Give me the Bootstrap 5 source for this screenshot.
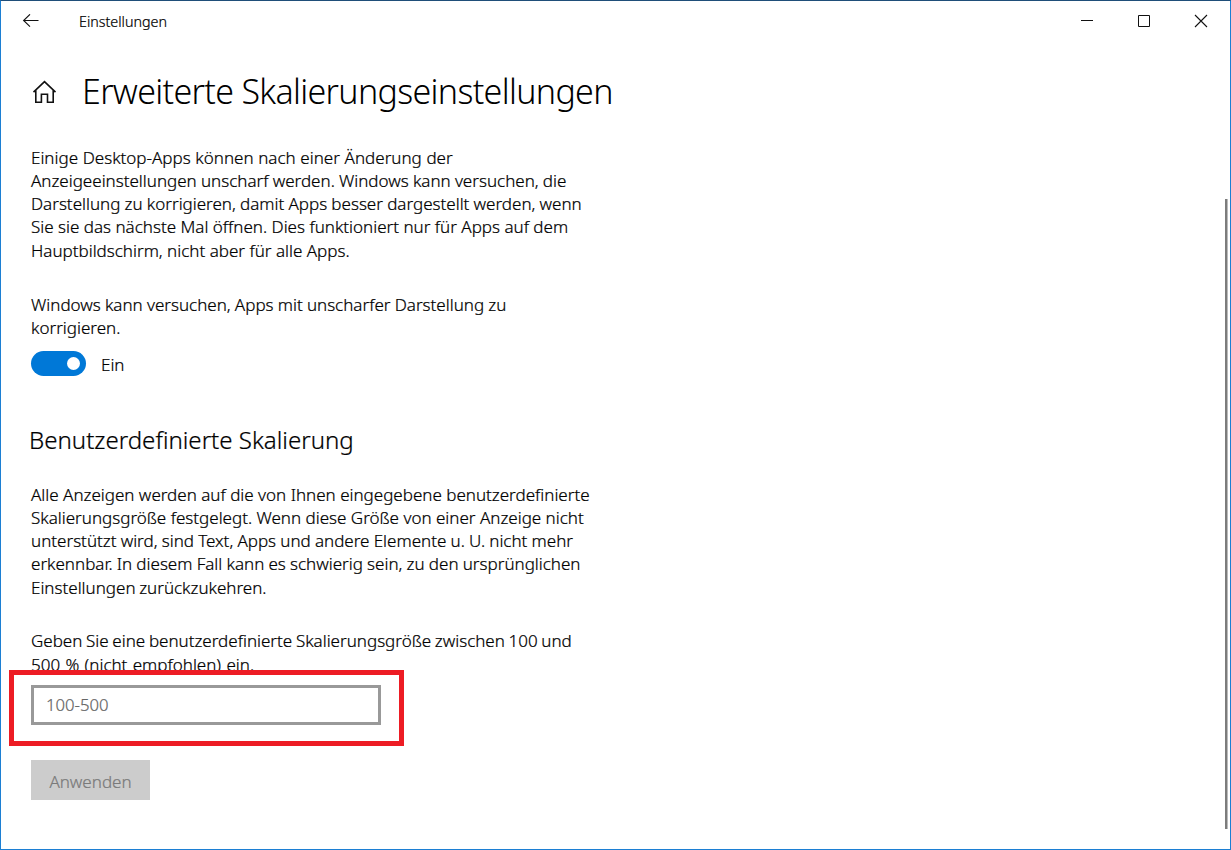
<!DOCTYPE html>
<html lang="de">
<head>
<meta charset="utf-8">
<meta name="viewport" content="width=device-width, initial-scale=1">
<title>Einstellungen</title>
<link href="https://cdn.jsdelivr.net/npm/bootstrap@5.3.0/dist/css/bootstrap.min.css" rel="stylesheet">
<style>
  body { font-family: "Noto Sans", sans-serif; font-weight: 300; font-size: 17px; line-height: 23.25px; color: #000; -webkit-text-stroke: .22px; }
  .app-window { height: 850px; border: 1px solid #1c7fd3; border-top-color: #1f4e79; background: #fff; }
  .title-bar { height: 40px; padding-left: 21px; padding-right: 22px; }
  .title-bar .app-name { font-size: 14.3px; margin-left: 40px; padding-top: 2px; }
  .window-buttons { gap: 43px; }
  .page-head { height: 48px; margin-top: 27px; padding-left: 29px; }
  .page-head h1 { font-size: 34px; font-weight: 300; line-height: 48px; letter-spacing: -.67px; margin: -3px 0 0 24px; -webkit-text-stroke: 0; }
  .settings-body { padding-left: 30px; width: 640px; }
  .settings-body p { margin: 0; white-space: nowrap; }
  .intro-text { padding-top: 29.7px; }
  .fix-text { padding-top: 30.6px; }
  .toggle-row { height: 25px; margin-top: 11.7px; gap: 15px; }
  .toggle-label { padding-top: 2px; }
  .win-switch { width: 55px; height: 25px; background: #0078d7; padding-right: 6px; }
  .win-knob { width: 13px; height: 13px; background: #fff; }
  .section-title { font-size: 24.05px; font-weight: 300; line-height: 34px; margin: 47px 0 0 -2px; }
  .custom-text { padding-top: 25.9px; }
  .size-label { padding-top: 30.5px; }
  .size-field { width: 350px; height: 40px; margin-top: 9px; }
  .size-field::before { content: ""; position: absolute; inset: -15px -23px -21px -22px; border: 5px solid #ed1c24; background: #fff; }
  .size-field .form-control { position: relative; height: 40px; border: 3px solid #999; padding: 0 12px; font-size: 16.7px; font-weight: 300; }
  .size-field .form-control::placeholder { color: #666; }
  .apply-btn { width: 119px; height: 40px; margin-top: 35px; padding: 3px 0 0; font-size: 17px; font-weight: 300; line-height: 1; --bs-btn-disabled-bg: #ccc; --bs-btn-disabled-color: #7a7a7a; --bs-btn-disabled-border-color: #ccc; --bs-btn-disabled-opacity: 1; }
  .line-wide { word-spacing: .25px; }
  .line-snug { word-spacing: -.22px; }
  .line-tight { word-spacing: -.75px; }
  .line-loose { word-spacing: .9px; }
  .scroll-thumb { top: 198px; right: 2px; width: 3px; height: 630px; background: #7c7c7c; border-right: 1px solid #bbb; }
</style>
</head>
<body>
<div class="app-window position-relative overflow-hidden d-flex flex-column">
  <header class="title-bar d-flex align-items-center flex-shrink-0">
    <svg width="17" height="14" viewBox="0 0 17 14" fill="none" stroke="#111" stroke-width="1.1"><path d="M16.5 6.5H1.5M8 .3 1.6 6.5 8 12.7"/></svg>
    <span class="app-name">Einstellungen</span>
    <div class="window-buttons d-flex align-items-center ms-auto">
      <svg width="14" height="14" viewBox="0 0 14 14"><path d="M1 6.5h12" stroke="#111"/></svg>
      <svg width="14" height="14" viewBox="0 0 14 14"><path d="M1.5 1.5h11v11h-11z" fill="none" stroke="#111"/></svg>
      <svg width="14" height="14" viewBox="0 0 14 14"><path d="m1 1 12 12M13 1 1 13" stroke="#111" stroke-width="1.1"/></svg>
    </div>
  </header>
  <main>
    <div class="page-head d-flex align-items-center">
      <svg width="28" height="24" viewBox="0 0 28 24" fill="none" stroke="#111" stroke-width="1.6"><path d="M3.5 12.2 14.5 1.6l11 10.6M5.8 10.3v11.9h5.6v-8h6.1v8h5.7V10.3"/></svg>
      <h1 class="text-nowrap">Erweiterte Skalierungseinstellungen</h1>
    </div>
    <div class="settings-body">
      <p class="intro-text"><span class="line-wide">Einige Desktop-Apps können nach einer Änderung der</span><br><span class="line-snug">Anzeigeeinstellungen unscharf werden. Windows kann versuchen, die</span><br><span class="line-snug">Darstellung zu korrigieren, damit Apps besser dargestellt werden, wenn</span><br>Sie sie das nächste Mal öffnen. Dies funktioniert nur für Apps auf dem<br>Hauptbildschirm, nicht aber für alle Apps.</p>
      <p class="fix-text"><span class="line-snug">Windows kann versuchen, Apps mit unscharfer Darstellung zu</span><br>korrigieren.</p>
      <div class="toggle-row d-flex align-items-center">
        <div class="win-switch rounded-pill d-flex align-items-center justify-content-end" role="switch" aria-checked="true"><span class="win-knob rounded-circle"></span></div>
        <span class="toggle-label">Ein</span>
      </div>
      <h2 class="section-title">Benutzerdefinierte Skalierung</h2>
      <p class="custom-text">Alle Anzeigen werden auf die von Ihnen eingegebene benutzerdefinierte<br>Skalierungsgröße festgelegt. Wenn diese Größe von einer Anzeige nicht<br><span class="line-snug">unterstützt wird, sind Text, Apps und andere Elemente u. U. nicht mehr</span><br><span class="line-snug">erkennbar. In diesem Fall kann es schwierig sein, zu den ursprünglichen</span><br><span class="line-tight">Einstellungen zurückzukehren.</span></p>
      <p class="size-label"><span class="line-tight">Geben Sie eine benutzerdefinierte Skalierungsgröße zwischen 100 und</span><br><span class="line-loose">500 % (nicht empfohlen) ein.</span></p>
      <div class="size-field position-relative">
        <input class="form-control rounded-0" type="text" placeholder="100-500">
      </div>
      <button class="btn apply-btn rounded-0 d-block" disabled>Anwenden</button>
    </div>
  </main>
  <div class="scroll-thumb position-absolute"></div>
</div>
<script src="https://cdn.jsdelivr.net/npm/bootstrap@5.3.0/dist/js/bootstrap.bundle.min.js"></script>
</body>
</html>
